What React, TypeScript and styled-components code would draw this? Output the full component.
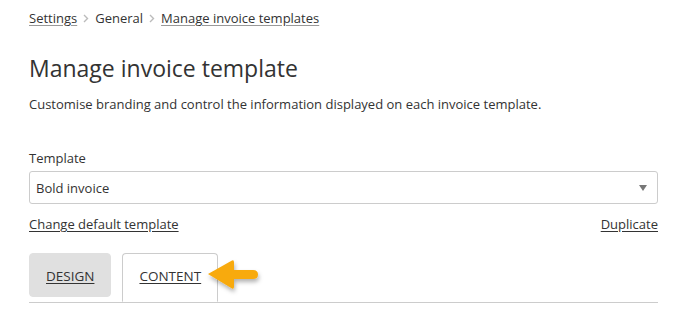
import React from 'react';
import styled, { createGlobalStyle } from 'styled-components';

const GlobalStyle = createGlobalStyle`
  html, body {
    margin: 0;
    padding: 0;
    background: #fff;
    font-family: 'Open Sans', 'Liberation Sans', sans-serif;
    color: #333;
  }
`;

// --- Styled Components ---

const Page = styled.div`
  width: 629px;
  padding: 9px 19px 0 29px;
`;

const Breadcrumbs = styled.nav`
  display: flex;
  align-items: center;
  gap: 6px;
  font-size: 13px;
  line-height: 18px;
`;

const Crumb = styled.a<{ $link?: boolean }>`
  color: #333;
  text-decoration: ${(p) => (p.$link ? 'underline' : 'none')};
  text-decoration-color: #999;
  text-underline-offset: 2px;
`;

const Chevron = styled.svg`
  width: 6px;
  height: 9px;
  flex-shrink: 0;
`;

const Title = styled.h1`
  margin: 25px 0 0;
  font-size: 23px;
  font-weight: 400;
  line-height: 32px;
  color: #333;
`;

const Lead = styled.p`
  margin: 11px 0 0;
  font-size: 13px;
  line-height: 18px;
`;

const Field = styled.div`
  margin-top: 36px;
  display: flex;
  flex-direction: column;
  gap: 4px;
`;

const Label = styled.label`
  font-size: 13px;
  line-height: 18px;
`;

const SelectBox = styled.div`
  height: 31px;
  border: 1px solid #ccc;
  border-radius: 3px;
  display: flex;
  align-items: center;
  justify-content: space-between;
  padding: 0 10px 0 6px;
  font-size: 13px;
`;

const Caret = styled.span`
  width: 0;
  height: 0;
  border-left: 4px solid transparent;
  border-right: 4px solid transparent;
  border-top: 6px solid #777;
`;

const LinkRow = styled.div`
  margin-top: 11px;
  display: flex;
  justify-content: space-between;
  font-size: 13px;
  line-height: 18px;
`;

const TextLink = styled.a`
  color: #333;
  text-decoration: underline;
  text-underline-offset: 2px;
`;

const Tabs = styled.div`
  margin-top: 20px;
  display: flex;
  align-items: flex-start;
  gap: 11px;
  border-bottom: 1px solid #ccc;
  position: relative;
`;

const Tab = styled.div<{ $active?: boolean }>`
  height: ${(p) => (p.$active ? '49px' : '44px')};
  box-sizing: border-box;
  padding: 13px 16px 0;
  font-size: 13.5px;
  line-height: 18px;
  text-transform: uppercase;
  text-decoration: underline;
  text-underline-offset: 2px;
  border-radius: ${(p) => (p.$active ? '4px 4px 0 0' : '4px')};
  background: ${(p) => (p.$active ? '#fff' : '#e0e0e0')};
  border: ${(p) => (p.$active ? '1px solid #ccc' : '1px solid #e0e0e0')};
  border-bottom: ${(p) => (p.$active ? '1px solid #fff' : '1px solid #e0e0e0')};
  margin-bottom: ${(p) => (p.$active ? '-1px' : '5px')};
  color: #333;
`;

const Pointer = styled.svg`
  position: absolute;
  left: 178px;
  top: 6px;
  width: 58px;
  height: 36px;
  overflow: visible;
`;

// --- Component ---

const ChevronIcon = () => (
  <Chevron viewBox="0 0 6 9">
    <path d="M1 1l3.5 3.5L1 8" fill="none" stroke="#bbb" strokeWidth="1.4" />
  </Chevron>
);

export default function App() {
  return (
    <>
      <GlobalStyle />
      <Page>
        <Breadcrumbs>
          <Crumb $link>Settings</Crumb>
          <ChevronIcon />
          <Crumb>General</Crumb>
          <ChevronIcon />
          <Crumb $link>Manage invoice templates</Crumb>
        </Breadcrumbs>

        <Title>Manage invoice template</Title>
        <Lead>Customise branding and control the information displayed on each invoice template.</Lead>

        <Field>
          <Label>Template</Label>
          <SelectBox>
            <span>Bold invoice</span>
            <Caret />
          </SelectBox>
        </Field>

        <LinkRow>
          <TextLink>Change default template</TextLink>
          <TextLink>Duplicate</TextLink>
        </LinkRow>

        <Tabs>
          <Tab>Design</Tab>
          <Tab $active>Content</Tab>
          <Pointer viewBox="0 0 58 36">
            <defs>
              <filter id="sh" x="-20%" y="-20%" width="150%" height="160%">
                <feDropShadow dx="1" dy="3" stdDeviation="2" floodColor="#000" floodOpacity="0.3" />
              </filter>
            </defs>
            <path
              d="M1 15 L25 1.5 Q27 0.5 27 3.5 L27 11 L46 11 Q51 11 51 15.5 Q51 20 46 20 L27 20 L27 27.5 Q27 30.5 25 29.5 Z"
              fill="#f8aa0c"
              filter="url(#sh)"
            />
          </Pointer>
        </Tabs>
      </Page>
    </>
  );
}
